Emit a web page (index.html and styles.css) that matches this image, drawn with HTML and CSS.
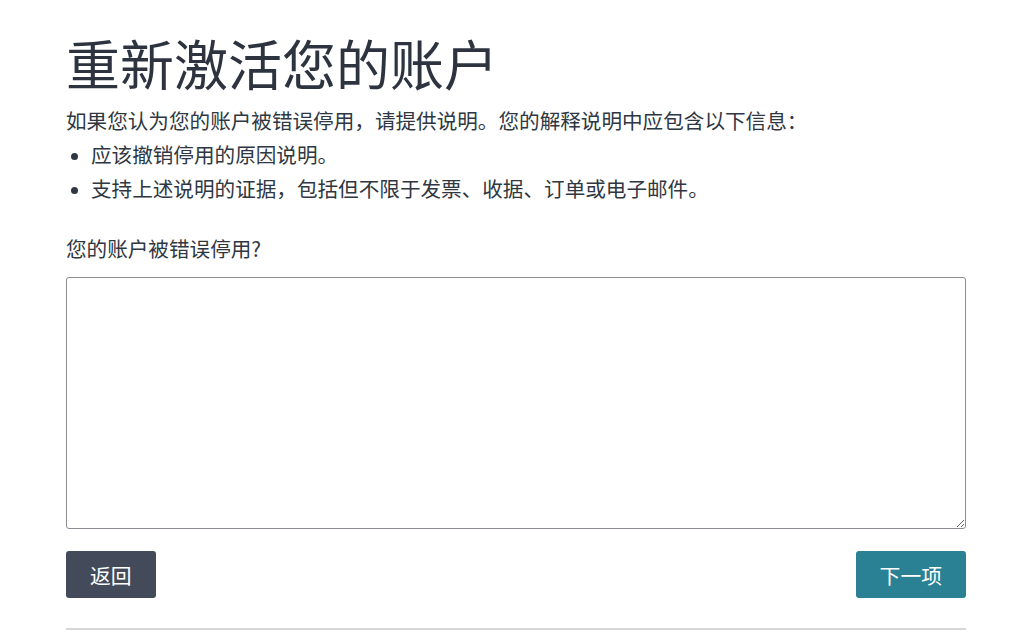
FILE: index.html
```html
<!DOCTYPE html>
<html lang="zh-CN">
<head>
    <meta charset="UTF-8">
    <meta name="viewport" content="width=device-width, initial-scale=1.0">
    <title>重新激活您的账户</title>
    <link rel="stylesheet" href="styles.css">
</head>
<body>
    <div class="container">
        <h1>重新激活您的账户</h1>
        <p class="intro">如果您认为您的账户被错误停用，请提供说明。您的解释说明中应包含以下信息：</p>
        <ul class="points">
            <li>应该撤销停用的原因说明。</li>
            <li>支持上述说明的证据，包括但不限于发票、收据、订单或电子邮件。</li>
        </ul>

        <form class="appeal-form">
            <label for="reason">您的账户被错误停用?</label>
            <textarea id="reason" name="reason"></textarea>

            <div class="actions">
                <button type="button" class="button button-back">返回</button>
                <button type="submit" class="button button-next">下一项</button>
            </div>
        </form>

        <hr class="divider">
    </div>
</body>
</html>
```

FILE: styles.css
```css
/* Reset */
* {
    margin: 0;
    padding: 0;
    box-sizing: border-box;
}

body {
    font-family: "Noto Sans CJK SC", "Noto Sans", sans-serif;
    background-color: #ffffff;
    color: #2f3742;
}

.container {
    width: 900px;
    margin-left: 66px;
    padding-top: 30px;
}

h1 {
    font-size: 54px;
    font-weight: 400;
    line-height: 65px;
    margin-bottom: 8px;
    color: #2d3440;
}

.intro,
.points li,
label {
    font-size: 20.6px;
    line-height: 34px;
}

.points {
    padding-left: 25px;
}

.points li::marker {
    font-size: 17px;
}

.appeal-form {
    margin-top: 26px;
}

label {
    display: block;
    margin-bottom: 12px;
}

textarea {
    display: block;
    width: 100%;
    height: 252px;
    border: 1px solid #8a8d92;
    border-radius: 3px;
    padding: 8px 10px;
    font-family: inherit;
    font-size: 18px;
    color: #2f3742;
}

.actions {
    display: flex;
    justify-content: space-between;
    margin-top: 22px;
}

.button {
    height: 47px;
    padding: 0 24px;
    border: none;
    border-radius: 3px;
    color: #ffffff;
    font-family: inherit;
    font-size: 20.8px;
    cursor: pointer;
}

.button-back {
    background-color: #434b5b;
}

.button-next {
    background-color: #2a8193;
}

.divider {
    border: none;
    border-top: 2px solid #d6d6d8;
    margin-top: 30px;
}
```
